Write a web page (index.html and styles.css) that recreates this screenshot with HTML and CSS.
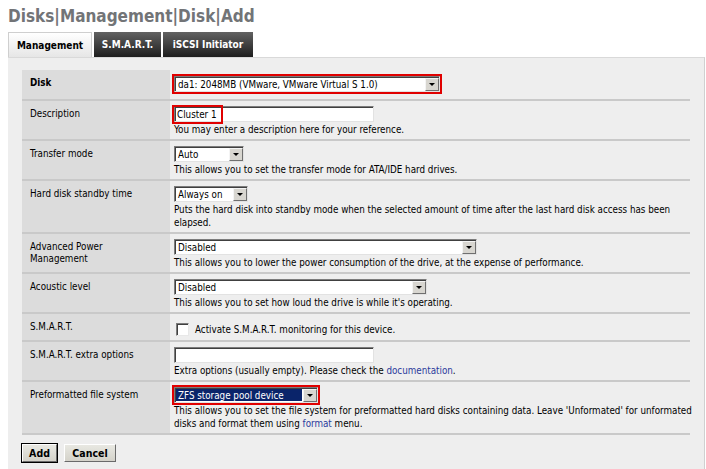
FILE: index.html
```html
<!DOCTYPE html>
<html>
<head>
<meta charset="utf-8">
<title>Disks | Management | Disk | Add</title>
<link rel="stylesheet" href="styles.css">
</head>
<body>
<div class="page">
  <h1 class="title">Disks|Management|Disk|Add</h1>
  <div class="tabs">
    <span class="tab tab-active tab-mgmt">Management</span>
    <span class="tab tab-smart">S.M.A.R.T.</span>
    <span class="tab tab-iscsi">iSCSI Initiator</span>
  </div>
  <div class="panel">
    <div class="form">
      <div class="row row-disk">
        <div class="label bold">Disk</div>
        <div class="value">
          <div class="select w-disk annot-outline"><span class="select-text">da1: 2048MB (VMware, VMware Virtual S 1.0)</span><span class="select-btn"><i class="arrow"></i></span></div>
        </div>
      </div>
      <div class="row">
        <div class="label">Description</div>
        <div class="value">
          <div class="annot-wrap">
            <div class="textbox">Cluster 1</div>
            <span class="annot annot-cluster"></span>
          </div>
          <div class="help">You may enter a description here for your reference.</div>
        </div>
      </div>
      <div class="row">
        <div class="label">Transfer mode</div>
        <div class="value">
          <div class="select w-transfer"><span class="select-text">Auto</span><span class="select-btn"><i class="arrow"></i></span></div>
          <div class="help">This allows you to set the transfer mode for ATA/IDE hard drives.</div>
        </div>
      </div>
      <div class="row">
        <div class="label">Hard disk standby time</div>
        <div class="value">
          <div class="select w-standby"><span class="select-text">Always on</span><span class="select-btn"><i class="arrow"></i></span></div>
          <div class="help nowrap">Puts the hard disk into standby mode when the selected amount of time after the last hard disk access has been<br>elapsed.</div>
        </div>
      </div>
      <div class="row">
        <div class="label">Advanced Power Management</div>
        <div class="value">
          <div class="select w-apm"><span class="select-text">Disabled</span><span class="select-btn"><i class="arrow"></i></span></div>
          <div class="help">This allows you to lower the power consumption of the drive, at the expense of performance.</div>
        </div>
      </div>
      <div class="row">
        <div class="label">Acoustic level</div>
        <div class="value">
          <div class="select w-acoustic"><span class="select-text">Disabled</span><span class="select-btn"><i class="arrow"></i></span></div>
          <div class="help">This allows you to set how loud the drive is while it's operating.</div>
        </div>
      </div>
      <div class="row row-check">
        <div class="label">S.M.A.R.T.</div>
        <div class="value">
          <div class="check-line"><span class="checkbox"></span><span>Activate S.M.A.R.T. monitoring for this device.</span></div>
        </div>
      </div>
      <div class="row">
        <div class="label">S.M.A.R.T. extra options</div>
        <div class="value">
          <div class="textbox"></div>
          <div class="help">Extra options (usually empty). Please check the <a class="link" href="#">documentation</a>.</div>
        </div>
      </div>
      <div class="row">
        <div class="label">Preformatted file system</div>
        <div class="value">
          <div class="select w-zfs annot-outline"><span class="select-text selected">ZFS storage pool device</span><span class="select-btn"><i class="arrow"></i></span></div>
          <div class="help nowrap">This allows you to set the file system for preformatted hard disks containing data. Leave 'Unformated' for unformated<br>disks and format them using <a class="link" href="#">format</a> menu.</div>
        </div>
      </div>
    </div>
    <div class="buttons">
      <span class="btn btn-default btn-add">Add</span>
      <span class="btn btn-cancel">Cancel</span>
    </div>
  </div>
</div>
</body>
</html>
```

FILE: styles.css
```css
html, body {
  margin: 0;
  background: #ffffff;
}
body {
  font-family: "DejaVu Sans Condensed", "DejaVu Sans", sans-serif;
  font-size: 9.75px;
  color: #000;
}
.page {
  padding: 0 1px 0 8px;
}
.title {
  margin: 0;
  padding-top: 6px;
  height: 26px;
  box-sizing: content-box;
  font-size: 17px;
  line-height: 20px;
  font-weight: bold;
  color: #727477;
}
.tabs {
  display: flex;
  gap: 2px;
  height: 25px;
}
.tab {
  display: flex;
  align-items: center;
  justify-content: center;
  font-weight: bold;
  font-size: 10px;
  color: #ffffff;
  background: linear-gradient(#626262, #1e1e1e);
  box-sizing: border-box;
}
.tab-active {
  color: #000;
  background: linear-gradient(#ffffff, #e6e6e6);
  border: 1px solid #cfcfcf;
  border-bottom: none;
}
.tab-mgmt { width: 84px; }
.tab-smart { width: 67px; }
.tab-iscsi { width: 90px; }

.panel {
  background: #eeeeee;
  border-top: 1px solid #d9d9d9;
  border-right: 1px solid #d0d0d0;
  padding: 12px 14px 0 14px;
  height: 399px;
  overflow: hidden;
}
.row {
  display: grid;
  grid-template-columns: 148px 1fr;
  border-bottom: 2px solid #c9c9c9;
}
.label {
  background: #dcdcdc;
  padding: 7px 8px 3px 8px;
  line-height: 12px;
}
.bold { font-weight: bold; }
.value {
  padding: 5px 4px 4px 4px;
  line-height: 13px;
}
.row-disk .label,
.row-disk .value {
  padding-top: 6px;
  padding-bottom: 7px;
}
.row-disk .label {
  line-height: 14px;
}
.help {
  line-height: 13px;
  padding-top: 1px;
  margin-bottom: -1px;
}
.nowrap {
  white-space: nowrap;
}
.select {
  display: flex;
  height: 16px;
  box-sizing: border-box;
  background: #fff;
  border: 1px solid;
  border-color: #7c7c7c #e2e2e2 #e2e2e2 #7c7c7c;
  box-shadow: inset 1px 1px 0 #404040;
  padding: 1px 0 0 1px;
}
.select-text {
  flex: 1;
  padding-left: 2px;
  line-height: 13px;
  white-space: nowrap;
  overflow: hidden;
}
.select-text.selected {
  background: #0a246a;
  color: #fff;
  margin: 0 1px 1px 0;
}
.select-btn {
  width: 14px;
  background: #d8d6d0;
  border: 1px solid;
  border-color: #f4f4f4 #6f6f6f #6f6f6f #f4f4f4;
  box-sizing: border-box;
  display: flex;
  align-items: center;
  justify-content: center;
}
.arrow {
  width: 0;
  height: 0;
  border-left: 3px solid transparent;
  border-right: 3px solid transparent;
  border-top: 3px solid #000;
}
.w-disk { width: 266px; }
.w-transfer { width: 70px; }
.w-standby { width: 74px; }
.w-apm { width: 303px; }
.w-acoustic { width: 253px; }
.w-zfs { width: 144px; }

.annot-outline {
  outline: 2px solid #e00000;
  outline-offset: 0;
}
.annot-wrap {
  position: relative;
  width: 200px;
}
.annot {
  position: absolute;
  box-sizing: border-box;
  border: 2px solid #e00000;
}
.annot-cluster {
  left: -2px;
  top: -1px;
  width: 51px;
  height: 19px;
}
.textbox {
  width: 200px;
  height: 16px;
  box-sizing: border-box;
  background: #fff;
  border: 1px solid;
  border-color: #7c7c7c #e2e2e2 #e2e2e2 #7c7c7c;
  box-shadow: inset 1px 1px 0 #404040;
  padding: 1px 0 0 2px;
  line-height: 13px;
}
.row-check .value {
  padding-top: 7px;
  padding-bottom: 3px;
}
.check-line {
  display: flex;
  align-items: center;
  gap: 6px;
  height: 16px;
}
.checkbox {
  width: 13px;
  height: 13px;
  box-sizing: border-box;
  margin-left: 2px;
  background: #fff;
  border: 1px solid;
  border-color: #7c7c7c #e8e8e8 #e8e8e8 #7c7c7c;
  box-shadow: inset 1px 1px 0 #404040;
}
.link {
  color: #2a3a9c;
  text-decoration: none;
}
.buttons {
  display: flex;
  gap: 7px;
  margin-top: 9px;
}
.btn {
  display: flex;
  align-items: center;
  justify-content: center;
  height: 18px;
  box-sizing: border-box;
  font-weight: bold;
  font-size: 10.5px;
  background: linear-gradient(#e8e8e2, #d4d2ca);
  border: 1px solid;
  border-color: #ffffff #6a6a6a #6a6a6a #ffffff;
}
.btn-default {
  outline: 1px solid #000;
  outline-offset: 0;
}
.btn-add { width: 35px; }
.btn-cancel { width: 52px; }
```
